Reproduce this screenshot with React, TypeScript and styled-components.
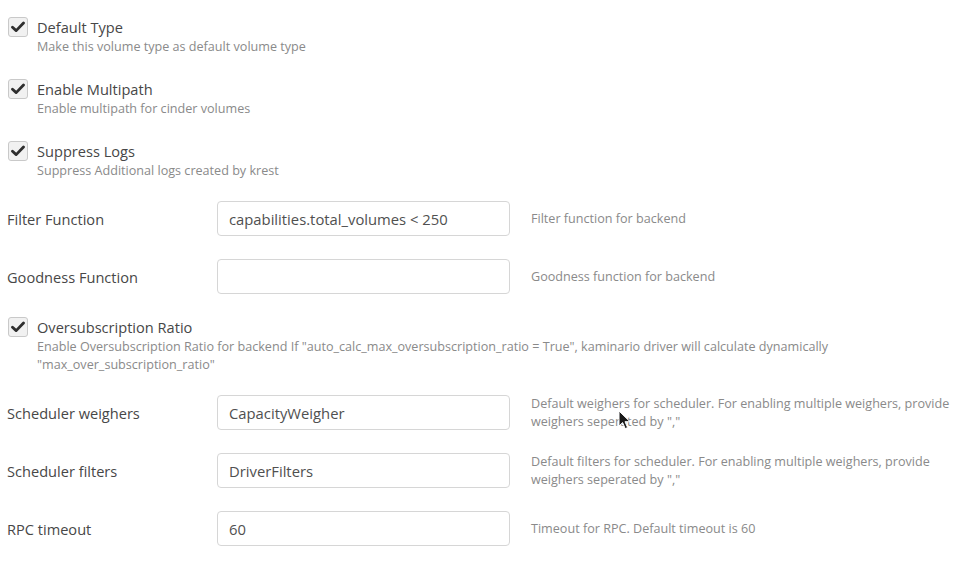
import styled, { createGlobalStyle } from "styled-components";

const GlobalStyle = createGlobalStyle`
  body {
    margin: 0;
    background: #fff;
    font-family: "Open Sans", "Noto Sans", sans-serif;
  }
`;

const Page = styled.div`
  position: relative;
  display: flex;
  flex-direction: column;
  gap: 21px;
  padding: 15px 4px 0 7px;
  width: 958px;
  height: 562px;
  box-sizing: border-box;
  overflow: hidden;
`;

const CheckBlock = styled.div`
  display: grid;
  grid-template-columns: 20px 1fr;
  column-gap: 9px;
  padding-top: 2px;
  padding-left: 1px;
`;

const Box = styled.span`
  width: 20px;
  height: 20px;
  box-sizing: border-box;
  border: 1px solid #c9c9c9;
  border-radius: 3px;
  background: #f1f1f1;
  display: flex;
  align-items: center;
  justify-content: center;
`;

const CheckLabel = styled.span`
  font-size: 14.6px;
  line-height: 20px;
  color: #474747;
`;

const CheckHelp = styled.div`
  grid-column: 2;
  font-size: 12.6px;
  line-height: 18px;
  color: #8a8a8a;
  margin-top: 1px;
  max-width: 880px;
`;

const FieldRow = styled.div`
  display: grid;
  grid-template-columns: 210px 293px 1fr;
  grid-template-rows: 35px;
  align-items: center;

  & + & {
    margin-top: 2px;
  }
`;

const FieldLabel = styled.label`
  font-size: 14.6px;
  line-height: 20px;
  color: #474747;
`;

const Input = styled.input`
  height: 35px;
  box-sizing: border-box;
  border: 1px solid #d6d6d6;
  border-radius: 4px;
  padding: 0 11px;
  font-family: "Open Sans", "Noto Sans", sans-serif;
  font-size: 14.8px;
  color: #505050;
  background: #fff;
  outline: none;
`;

const FieldHelp = styled.div`
  margin-left: 21px;
  font-size: 12.6px;
  line-height: 18px;
  color: #8a8a8a;
`;

const Cursor = styled.svg`
  position: absolute;
  left: 618px;
  top: 410px;
`;

const Check = () => (
  <Box>
    <svg width="14" height="12" viewBox="0 0 14 12">
      <path
        d="M1.5 6.2 L5.2 9.6 L12.5 2"
        fill="none"
        stroke="#2e2e2e"
        strokeWidth="2.8"
        strokeLinecap="round"
        strokeLinejoin="round"
      />
    </svg>
  </Box>
);

const CheckItem = ({ label, help }: { label: string; help: string }) => (
  <CheckBlock>
    <Check />
    <CheckLabel>{label}</CheckLabel>
    <CheckHelp>{help}</CheckHelp>
  </CheckBlock>
);

const Field = ({
  label,
  value,
  help,
}: {
  label: string;
  value: string;
  help: string;
}) => (
  <FieldRow>
    <FieldLabel>{label}</FieldLabel>
    <Input defaultValue={value} />
    <FieldHelp>{help}</FieldHelp>
  </FieldRow>
);

export default function App() {
  return (
    <>
      <GlobalStyle />
      <Page>
        <CheckItem
          label="Default Type"
          help="Make this volume type as default volume type"
        />
        <CheckItem
          label="Enable Multipath"
          help="Enable multipath for cinder volumes"
        />
        <CheckItem
          label="Suppress Logs"
          help="Suppress Additional logs created by krest"
        />
        <Field
          label="Filter Function"
          value="capabilities.total_volumes < 250"
          help="Filter function for backend"
        />
        <Field
          label="Goodness Function"
          value=""
          help="Goodness function for backend"
        />
        <CheckItem
          label="Oversubscription Ratio"
          help={
            'Enable Oversubscription Ratio for backend If "auto_calc_max_oversubscription_ratio = True", kaminario driver will calculate dynamically "max_over_subscription_ratio"'
          }
        />
        <Field
          label="Scheduler weighers"
          value="CapacityWeigher"
          help={
            'Default weighers for scheduler. For enabling multiple weighers, provide weighers seperated by ","'
          }
        />
        <Field
          label="Scheduler filters"
          value="DriverFilters"
          help={
            'Default filters for scheduler. For enabling multiple weighers, provide weighers seperated by ","'
          }
        />
        <Field
          label="RPC timeout"
          value="60"
          help="Timeout for RPC. Default timeout is 60"
        />
        <Cursor width="13" height="20" viewBox="0 0 13 20">
          <path
            d="M1 1 L1 16 L4.6 12.6 L7.2 18.6 L9.6 17.6 L7 11.7 L12 11.7 Z"
            fill="#1a1a1a"
            stroke="#fff"
            strokeWidth="1"
            strokeLinejoin="round"
          />
        </Cursor>
      </Page>
    </>
  );
}
